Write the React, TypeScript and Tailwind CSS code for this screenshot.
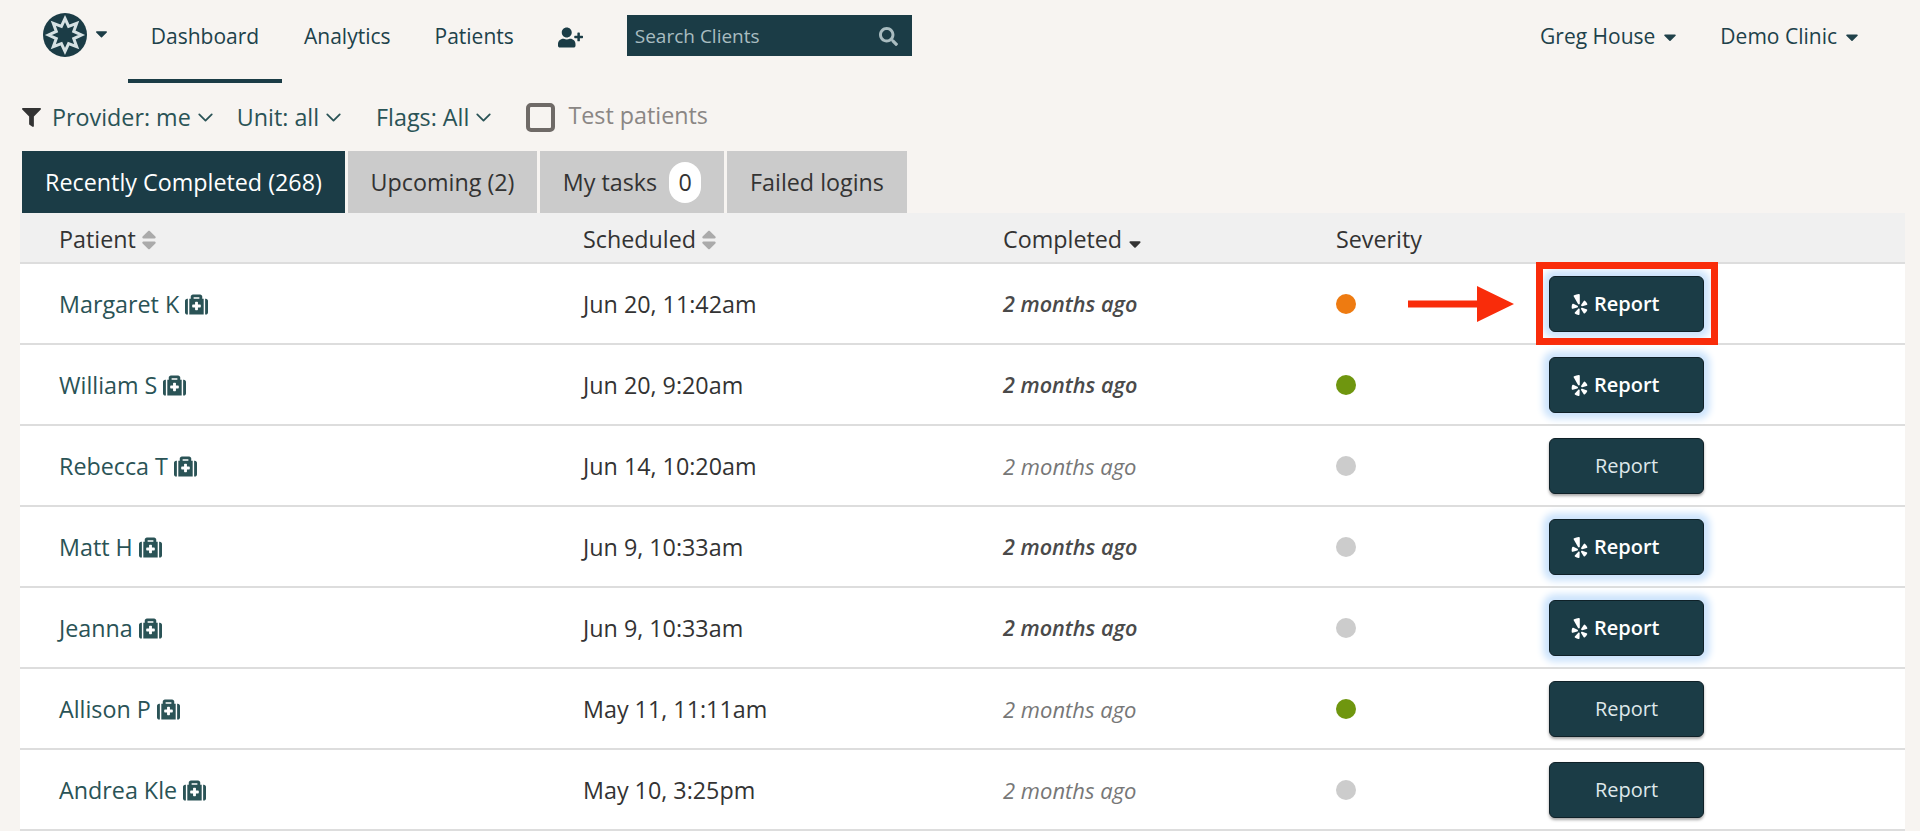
import { FaCaretDown, FaFilter, FaMedkit, FaSearch, FaSort, FaSortDown, FaUserPlus, FaYelp } from "react-icons/fa";
import { ChevronDown } from "lucide-react";

const patients = [
  { name: "Margaret K", scheduled: "Jun 20, 11:42am", bold: true, severity: "bg-[#ee7b11]", yelp: true, flagged: true },
  { name: "William S", scheduled: "Jun 20, 9:20am", bold: true, severity: "bg-[#6f960f]", yelp: true },
  { name: "Rebecca T", scheduled: "Jun 14, 10:20am", bold: false, severity: "bg-[#cccccc]", yelp: false },
  { name: "Matt H", scheduled: "Jun 9, 10:33am", bold: true, severity: "bg-[#cccccc]", yelp: true },
  { name: "Jeanna", scheduled: "Jun 9, 10:33am", bold: true, severity: "bg-[#cccccc]", yelp: true },
  { name: "Allison P", scheduled: "May 11, 11:11am", bold: false, severity: "bg-[#6f960f]", yelp: false },
  { name: "Andrea Kle", scheduled: "May 10, 3:25pm", bold: false, severity: "bg-[#cccccc]", yelp: false },
];

function Logo() {
  return (
    <svg width="44" height="44" viewBox="0 0 44 44">
      <circle cx="22" cy="22" r="22" fill="#1b3c46" />
      <polygon
        points="22,5.5 25.6,13.3 33.7,10.3 30.7,18.4 38.5,22 30.7,25.6 33.7,33.7 25.6,30.7 22,38.5 18.4,30.7 10.3,33.7 13.3,25.6 5.5,22 13.3,18.4 10.3,10.3 18.4,13.3"
        fill="none"
        stroke="#d5e0e2"
        strokeWidth="3"
      />
    </svg>
  );
}

function FilterMenu({ label, className }: { label: string; className: string }) {
  return (
    <div className={`flex items-center gap-[2px] text-[#2a5356] ${className}`}>
      <span>{label}</span>
      <ChevronDown size={25} strokeWidth={1.7} />
    </div>
  );
}

function SortLabel({ label }: { label: string }) {
  return (
    <div className="flex items-center gap-[1px]">
      <span>{label}</span>
      <FaSort size={24} className="text-[#aaaaaa]" />
    </div>
  );
}

export default function App() {
  return (
    <div className="h-[831px] overflow-hidden bg-[#f7f4f1] font-['Open_Sans',sans-serif] text-[21px] text-[#333333]">
      {/* top nav */}
      <div className="flex h-[84px] items-start">
        <div className="ml-[43px] mt-[13px] flex items-center">
          <Logo />
          <FaCaretDown size={19} className="ml-[5px] mt-[-4px] text-[#1b3c46]" />
        </div>
        <div className="ml-[17px] flex h-[83px] w-[154px] justify-center border-b-[4px] border-[#1b3c46] pt-[21px] text-[#20414a]">
          Dashboard
        </div>
        <div className="ml-[22px] pt-[21px] text-[#20414a]">Analytics</div>
        <div className="ml-[44px] pt-[21px] text-[#20414a]">Patients</div>
        <FaUserPlus size={25} className="ml-[44px] mt-[25px] text-[#1b3c46]" />
        <div className="ml-[44px] mt-[15px] flex h-[41px] w-[285px] items-center justify-between bg-[#1b3c46] pl-[8px] pr-[14px] pt-[1px] text-[19px] text-[#a9bcc0]">
          <span>Search Clients</span>
          <FaSearch size={19} />
        </div>
        <div className="ml-auto flex items-center pt-[21px] text-[#20414a]">
          <span>Greg House</span>
          <FaCaretDown size={20} className="ml-[5px]" />
          <span className="ml-[40px]">Demo Clinic</span>
          <FaCaretDown size={20} className="ml-[5px] mr-[58px]" />
        </div>
      </div>

      {/* filters */}
      <div className="ml-[22px] flex h-[67px] items-center text-[23.3px]">
        <FaFilter size={19} className="text-[#333333]" />
        <FilterMenu label="Provider: me" className="ml-[11px]" />
        <FilterMenu label="Unit: all" className="ml-[19px]" />
        <FilterMenu label="Flags: All" className="ml-[30px]" />
        <div className="ml-[30px] h-[29px] w-[29px] rounded-[5px] border-[4px] border-[#6f6a67] bg-[#f7f4f1]" />
        <span className="ml-[13px] mt-[-5px] text-[#8a8684]">Test patients</span>
      </div>

      {/* tabs */}
      <div className="ml-[22px] flex h-[62px] gap-[3px] text-[23.3px]">
        <div className="flex w-[323px] items-center justify-center bg-[#1b3c46] text-white">Recently Completed (268)</div>
        <div className="flex w-[189px] items-center justify-center bg-[#cbcbcb]">Upcoming (2)</div>
        <div className="flex w-[184px] items-center justify-center gap-[12px] bg-[#cbcbcb]">
          <span>My tasks</span>
          <span className="flex h-[41px] w-[32px] items-center justify-center rounded-full bg-white">0</span>
        </div>
        <div className="flex w-[180px] items-center justify-center bg-[#cbcbcb]">Failed logins</div>
      </div>

      {/* table */}
      <div className="ml-[20px] mr-[15px]">
        <div className="grid h-[51px] grid-cols-[563px_420px_333px_1fr] items-center border-b-[2px] border-[#dddddd] bg-[#f0f0f0] pt-[4px] text-[23.3px]">
          <div className="pl-[39px]">
            <SortLabel label="Patient" />
          </div>
          <SortLabel label="Scheduled" />
          <div className="flex items-center gap-[3px]">
            <span>Completed</span>
            <FaSortDown size={20} />
          </div>
          <div>Severity</div>
        </div>

        {patients.map((p) => (
          <div
            key={p.name}
            className="grid h-[81px] grid-cols-[563px_420px_333px_213px_155px] items-center border-b-[2px] border-[#dddddd] bg-white pt-[1px] text-[23.3px]"
          >
            <div className="flex items-center gap-[6px] pl-[39px] text-[#2a5356]">
              <span>{p.name}</span>
              <FaMedkit size={23} />
            </div>
            <div>{p.scheduled}</div>
            <div className={`italic ${p.bold ? "text-[21.6px] font-semibold text-[#4a4a4a]" : "text-[22px] text-[#777777]"}`}>
              2 months ago
            </div>
            <div className="relative">
              <div className={`h-[20px] w-[20px] rounded-full ${p.severity}`} />
              {p.flagged && (
                <svg width="106" height="36" viewBox="0 0 106 36" className="absolute left-[72px] top-[-8px]">
                  <path d="M0 14.5H69V0L106 18L69 36V21.5H0Z" fill="#f92c0a" />
                </svg>
              )}
            </div>
            <div className="relative">
              <div
                className={`flex h-[56px] items-center rounded-[6px] border border-[#0f2128] bg-[#1b3c46] text-[20px] ${
                  p.yelp
                    ? "justify-start gap-[4px] pl-[19px] font-semibold text-white shadow-[0_0_7px_6px_#cde4fc]"
                    : "justify-center text-[#dfe8ea] shadow-[0_2px_3px_rgba(0,0,0,0.35)]"
                }`}
              >
                {p.yelp && <FaYelp size={21} />}
                <span>Report</span>
              </div>
              {p.flagged && (
                <div className="absolute left-[-13px] top-[-14px] h-[83px] w-[182px] border-[7px] border-[#f92c0a]" />
              )}
            </div>
          </div>
        ))}
      </div>
    </div>
  );
}
